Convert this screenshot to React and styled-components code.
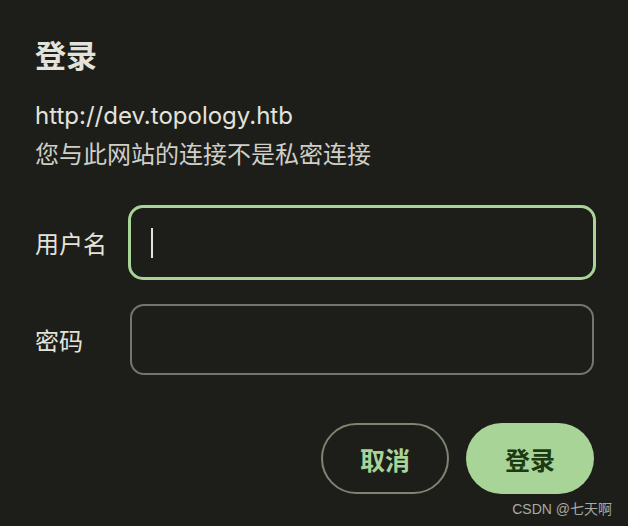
import React from "react";
import styled, { createGlobalStyle } from "styled-components";

const colors = {
  background: "#1d1e1a",
  text: "#e3e3dc",
  muted: "#cfcfc8",
  accent: "#a9d498",
  accentDark: "#1d3b12",
  border: "#74756f",
  outline: "#7b8570",
};

const fontStack = `Inter, "Noto Sans CJK SC", sans-serif`;

const GlobalStyle = createGlobalStyle`
  html, body {
    margin: 0;
    padding: 0;
    background: ${colors.background};
  }
  body {
    font-family: ${fontStack};
    color: ${colors.text};
  }
`;

const Dialog = styled.div`
  position: relative;
  box-sizing: border-box;
  width: 628px;
  height: 526px;
  padding: 34px 34px 0 35px;
  background: ${colors.background};
  display: flex;
  flex-direction: column;
`;

const Title = styled.h1`
  margin: 0;
  font-size: 31px;
  line-height: 44px;
  font-weight: 700;
`;

const Origin = styled.div`
  margin-top: 18px;
  font-size: 24px;
  line-height: 39px;
`;

const Notice = styled.div`
  font-size: 24px;
  line-height: 39px;
  color: ${colors.muted};
`;

const Form = styled.div`
  margin-top: 31px;
  display: flex;
  flex-direction: column;
  gap: 24px;
`;

const Row = styled.label`
  display: flex;
  align-items: center;
`;

const Label = styled.span`
  width: 95px;
  flex-shrink: 0;
  font-size: 24px;
`;

const Field = styled.div`
  flex: 1;
  box-sizing: border-box;
  display: flex;
  align-items: center;
  ${(p) =>
    p.$focused
      ? `
    height: 75px;
    margin: 0 -2px;
    padding-left: 20px;
    border: 3px solid ${colors.accent};
    border-radius: 15px;
  `
      : `
    height: 71px;
    padding-left: 21px;
    border: 2px solid ${colors.border};
    border-radius: 14px;
  `}
`;

const Caret = styled.span`
  display: block;
  width: 2px;
  height: 30px;
  background: ${colors.text};
`;

const Actions = styled.div`
  margin-top: 48px;
  display: flex;
  justify-content: flex-end;
  gap: 17px;
`;

const Button = styled.button`
  width: 128px;
  height: 71px;
  box-sizing: border-box;
  border-radius: 36px;
  font-family: ${fontStack};
  font-size: 25px;
  font-weight: 700;
  cursor: pointer;
  border: ${(p) => (p.$primary ? "none" : `2px solid ${colors.outline}`)};
  background: ${(p) => (p.$primary ? colors.accent : "transparent")};
  color: ${(p) => (p.$primary ? colors.accentDark : colors.accent)};
`;

const Watermark = styled.div`
  position: absolute;
  right: 16px;
  bottom: 8px;
  font-family: "Liberation Sans", "Noto Sans CJK SC", sans-serif;
  font-size: 14px;
  color: #a9a9a6;
`;

export default function App() {
  return (
    <>
      <GlobalStyle />
      <Dialog>
        <Title>登录</Title>
        <Origin>http://dev.topology.htb</Origin>
        <Notice>您与此网站的连接不是私密连接</Notice>
        <Form>
          <Row>
            <Label>用户名</Label>
            <Field $focused>
              <Caret />
            </Field>
          </Row>
          <Row>
            <Label>密码</Label>
            <Field />
          </Row>
        </Form>
        <Actions>
          <Button>取消</Button>
          <Button $primary>登录</Button>
        </Actions>
        <Watermark>CSDN @七天啊</Watermark>
      </Dialog>
    </>
  );
}
